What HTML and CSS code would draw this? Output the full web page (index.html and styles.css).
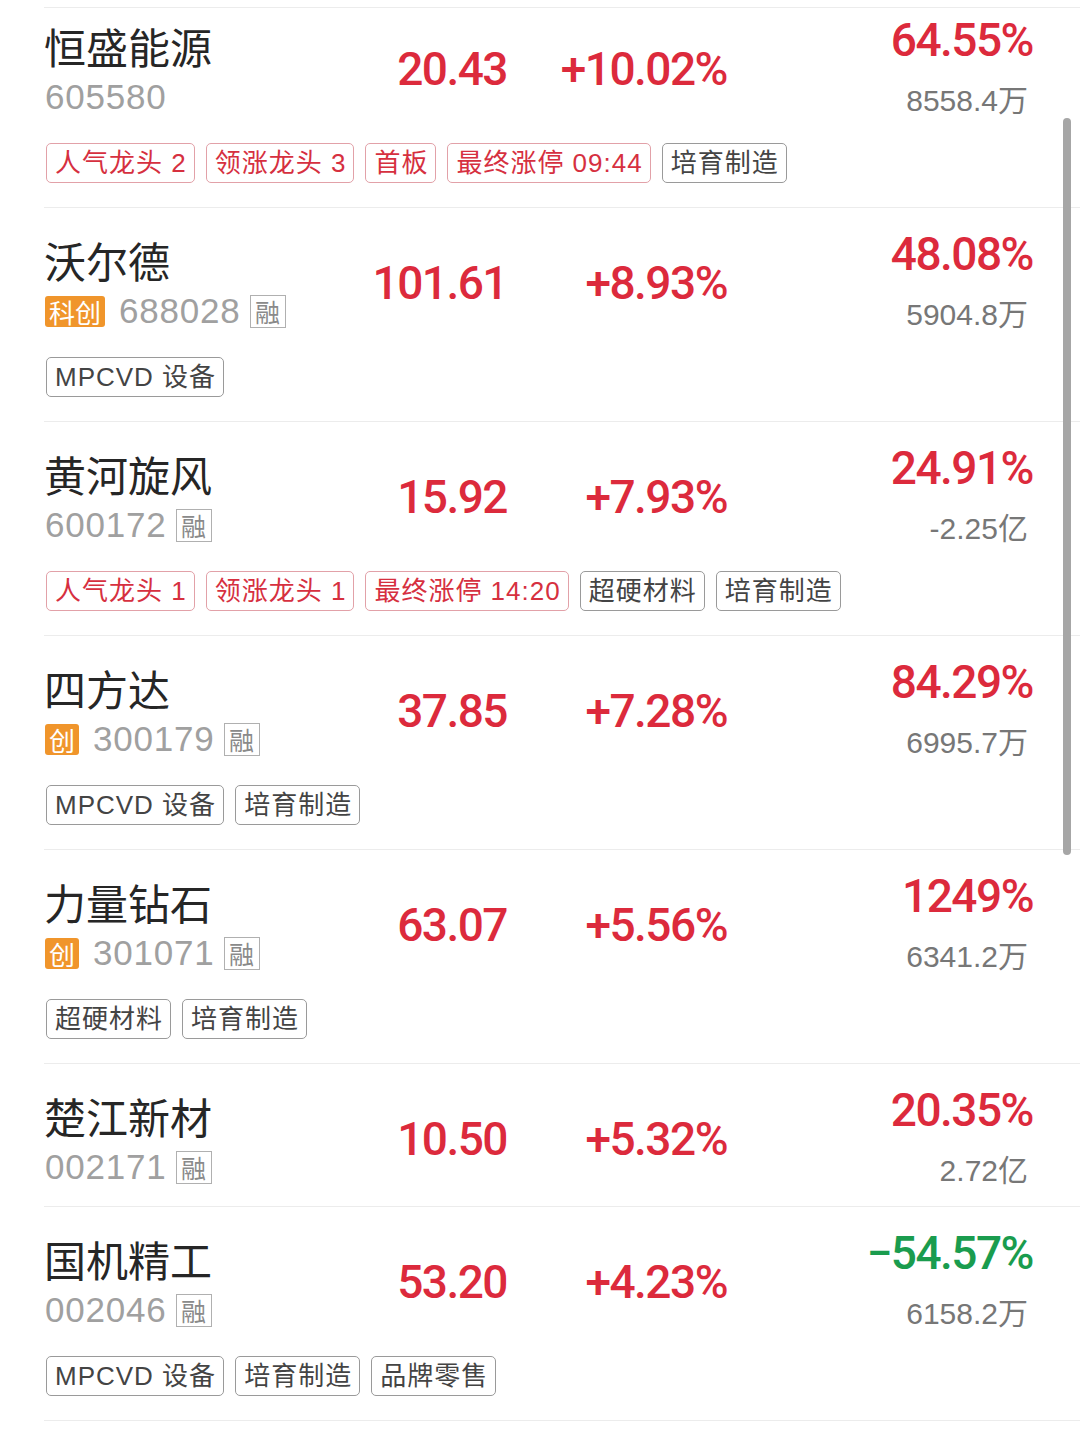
FILE: index.html
```html
<!DOCTYPE html>
<html lang="zh-CN">
<head>
  <meta charset="UTF-8" />
  <meta name="viewport" content="width=device-width, initial-scale=1.0"/>
  <title>涨幅榜</title>
  <link rel="stylesheet" href="styles.css">
</head>
<body>
  <div class="list">
    <div class="row first">
      <div class="row-main">
        <div class="info">
          <div class="name">恒盛能源</div>
          <div class="code-line"><span class="code">605580</span></div>
        </div>
        <div class="price up">20.43</div>
        <div class="change up">+10.02%</div>
        <div class="stats"><div class="ratio up">64.55%</div><div class="amount">8558.4万</div></div>
      </div>
      <div class="tags">
        <span class="tag hot">人气龙头 2</span>
        <span class="tag hot">领涨龙头 3</span>
        <span class="tag hot">首板</span>
        <span class="tag hot">最终涨停 09:44</span>
        <span class="tag">培育制造</span>
      </div>
    </div>

    <div class="row">
      <div class="row-main">
        <div class="info">
          <div class="name">沃尔德</div>
          <div class="code-line"><span class="board">科创</span><span class="code">688028</span><span class="rong">融</span></div>
        </div>
        <div class="price up">101.61</div>
        <div class="change up">+8.93%</div>
        <div class="stats"><div class="ratio up">48.08%</div><div class="amount">5904.8万</div></div>
      </div>
      <div class="tags">
        <span class="tag">MPCVD 设备</span>
      </div>
    </div>

    <div class="row">
      <div class="row-main">
        <div class="info">
          <div class="name">黄河旋风</div>
          <div class="code-line"><span class="code">600172</span><span class="rong">融</span></div>
        </div>
        <div class="price up">15.92</div>
        <div class="change up">+7.93%</div>
        <div class="stats"><div class="ratio up">24.91%</div><div class="amount">-2.25亿</div></div>
      </div>
      <div class="tags">
        <span class="tag hot">人气龙头 1</span>
        <span class="tag hot">领涨龙头 1</span>
        <span class="tag hot">最终涨停 14:20</span>
        <span class="tag">超硬材料</span>
        <span class="tag">培育制造</span>
      </div>
    </div>

    <div class="row">
      <div class="row-main">
        <div class="info">
          <div class="name">四方达</div>
          <div class="code-line"><span class="board">创</span><span class="code">300179</span><span class="rong">融</span></div>
        </div>
        <div class="price up">37.85</div>
        <div class="change up">+7.28%</div>
        <div class="stats"><div class="ratio up">84.29%</div><div class="amount">6995.7万</div></div>
      </div>
      <div class="tags">
        <span class="tag">MPCVD 设备</span>
        <span class="tag">培育制造</span>
      </div>
    </div>

    <div class="row">
      <div class="row-main">
        <div class="info">
          <div class="name">力量钻石</div>
          <div class="code-line"><span class="board">创</span><span class="code">301071</span><span class="rong">融</span></div>
        </div>
        <div class="price up">63.07</div>
        <div class="change up">+5.56%</div>
        <div class="stats"><div class="ratio up">1249%</div><div class="amount">6341.2万</div></div>
      </div>
      <div class="tags">
        <span class="tag">超硬材料</span>
        <span class="tag">培育制造</span>
      </div>
    </div>

    <div class="row">
      <div class="row-main">
        <div class="info">
          <div class="name">楚江新材</div>
          <div class="code-line"><span class="code">002171</span><span class="rong">融</span></div>
        </div>
        <div class="price up">10.50</div>
        <div class="change up">+5.32%</div>
        <div class="stats"><div class="ratio up">20.35%</div><div class="amount">2.72亿</div></div>
      </div>
    </div>

    <div class="row">
      <div class="row-main">
        <div class="info">
          <div class="name">国机精工</div>
          <div class="code-line"><span class="code">002046</span><span class="rong">融</span></div>
        </div>
        <div class="price up">53.20</div>
        <div class="change up">+4.23%</div>
        <div class="stats"><div class="ratio down">−54.57%</div><div class="amount">6158.2万</div></div>
      </div>
      <div class="tags">
        <span class="tag">MPCVD 设备</span>
        <span class="tag">培育制造</span>
        <span class="tag">品牌零售</span>
      </div>
    </div>
  </div>

  <div class="scrollbar"></div>
</body>
</html>
```

FILE: styles.css
```css
* { box-sizing: border-box; }
body {
  margin: 0;
  background: #fff;
  font-family: "Noto Sans CJK SC", sans-serif;
  color: #222;
}
.list {
  margin-left: 44px;
  padding-top: 7px;
}
.row {
  border-top: 1px solid #ececec;
  padding: 27px 47px 20px 0;
}
.row.first { padding-top: 13px; }
.row:last-child { border-bottom: 1px solid #ececec; }
.row-main {
  display: grid;
  grid-template-columns: 300px 163px 220px 1fr;
  align-items: center;
}
.name {
  font-size: 42px;
  line-height: 50px;
  color: #262626;
}
.code-line {
  display: flex;
  align-items: center;
  gap: 7px;
  height: 38px;
  margin-top: 7px;
}
.code {
  font-family: "Liberation Sans", "Noto Sans CJK SC", sans-serif;
  font-size: 35px;
  letter-spacing: 0.8px;
  color: #a0a0a0;
  padding-left: 1px;
}
.board {
  background: #f0952b;
  color: #fff;
  font-size: 26px;
  height: 31px;
  line-height: 31px;
  padding: 0 4px;
  border-radius: 3px;
  margin-right: 6px;
  margin-left: 1px;
}
.rong {
  display: flex;
  align-items: center;
  justify-content: center;
  width: 36px;
  height: 33px;
  margin-left: 2px;
  border: 1.5px solid #b0b0b0;
  color: #8a8a8a;
  font-size: 25px;
}
.price, .change, .ratio {
  font-family: Roboto, "Liberation Sans", sans-serif;
  font-weight: 500;
  font-size: 46px;
  letter-spacing: -1.5px;
  text-align: right;
}
.up { color: #dc2a3c; }
.down { color: #1a9c4e; }
.stats {
  align-self: start;
  text-align: right;
  margin-top: -4px;
  height: 95px;
}
.ratio { line-height: 46px; }
.amount {
  font-family: "Liberation Sans", "Noto Sans CJK SC", sans-serif;
  font-size: 30px;
  line-height: 30px;
  color: #777;
  margin-top: 23px;
  padding-right: 5px;
}
.tags {
  display: flex;
  gap: 11px;
  margin: 27px 0 4px;
  padding-left: 2px;
}
.tag {
  height: 40px;
  line-height: 38px;
  padding: 0 7px 0 8px;
  border: 1px solid #9a9a9a;
  border-radius: 5px;
  font-family: "Liberation Sans", "Noto Sans CJK SC", sans-serif;
  font-size: 26px;
  letter-spacing: 1px;
  color: #444;
  white-space: nowrap;
}
.tag.hot {
  color: #d6303f;
  border-color: #e2a1a8;
}
.scrollbar {
  position: absolute;
  left: 1063px;
  top: 118px;
  width: 8px;
  height: 737px;
  background: #a6a6a6;
  border-radius: 4px;
}
```
